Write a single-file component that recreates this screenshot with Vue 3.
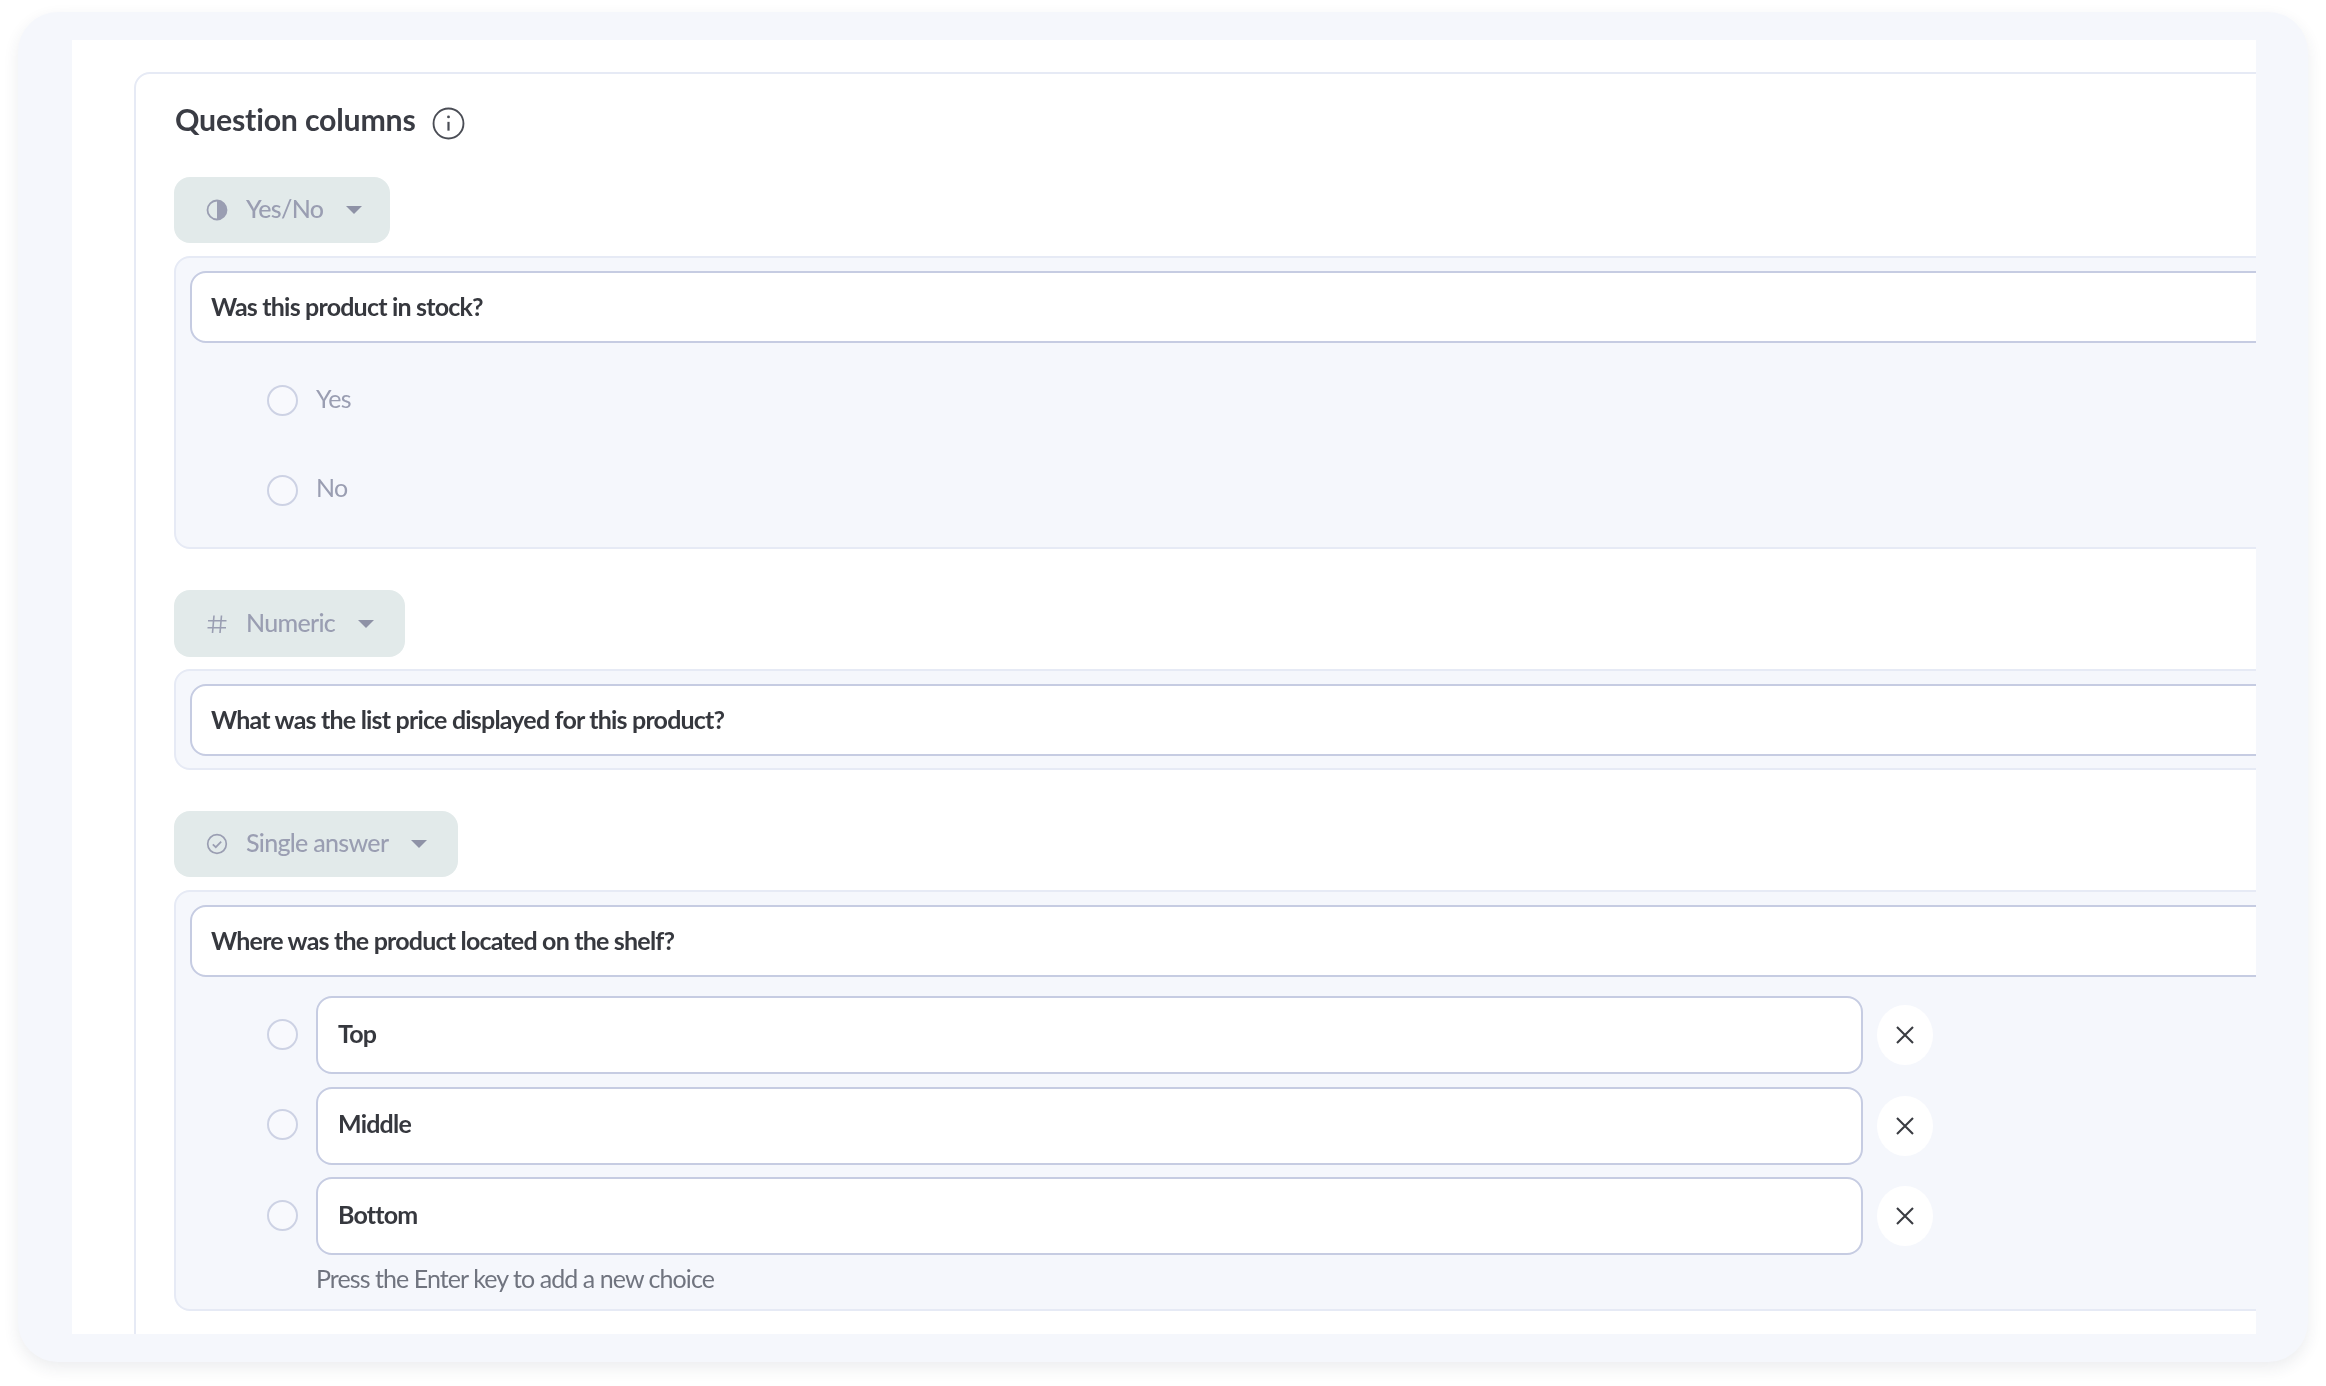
<script setup>
const hint = 'Press the Enter key to add a new choice'
const choices = ['Top', 'Middle', 'Bottom']
</script>

<template>
  <div class="page">
    <div class="frame">
      <div class="viewport">
        <section class="section">
          <div class="title-row">
            <h2 class="title">Question columns</h2>
            <svg class="info" viewBox="0 0 30 30" fill="none" stroke="#4a4d55" stroke-width="1.7">
              <circle cx="15" cy="15" r="13.6" />
              <path d="M15 13.5v8" stroke-width="2" />
              <circle cx="15" cy="9" r="1.3" fill="#4a4d55" stroke="none" />
            </svg>
          </div>

          <button class="chip chip-yes">
            <svg class="chip-icon" viewBox="0 0 22 22">
              <circle cx="11" cy="11" r="9.5" fill="none" stroke="#9a9eb2" stroke-width="1.8" />
              <path d="M11 1.5a9.5 9.5 0 0 1 0 19z" fill="#9a9eb2" />
            </svg>
            <span class="chip-label">Yes/No</span>
            <span class="caret"></span>
          </button>
          <div class="panel panel-yes">
            <div class="field question">Was this product in stock?</div>
            <div class="static-option first"><span class="radio"></span><span class="muted">Yes</span></div>
            <div class="static-option"><span class="radio"></span><span class="muted">No</span></div>
          </div>

          <button class="chip chip-num">
            <svg class="chip-icon" viewBox="0 0 22 22" fill="none" stroke="#9a9eb2" stroke-width="1.6">
              <path d="M8 2.5 6.5 20M15.5 2.5 14 20M2 7.7h18.5M1.5 14.8H20" />
            </svg>
            <span class="chip-label">Numeric</span>
            <span class="caret"></span>
          </button>
          <div class="panel panel-num">
            <div class="field question">What was the list price displayed for this product?</div>
          </div>

          <button class="chip chip-single">
            <svg class="chip-icon" viewBox="0 0 22 22" fill="none" stroke="#9a9eb2" stroke-width="1.7">
              <circle cx="11" cy="11" r="9.3" />
              <path d="m6.8 11.3 3 2.9 5.4-5.6" />
            </svg>
            <span class="chip-label">Single answer</span>
            <span class="caret"></span>
          </button>
          <div class="panel panel-single">
            <div class="field question">Where was the product located on the shelf?</div>
            <div class="choices">
              <div v-for="choice in choices" :key="choice" class="choice">
                <span class="radio choice-radio"></span>
                <div class="field choice-field">{{ choice }}</div>
                <button class="remove" :aria-label="'Remove ' + choice">
                  <svg viewBox="0 0 20 20" fill="none" stroke="#3a3c42" stroke-width="2.1">
                    <path d="M2 2l16 16M18 2 2 18" />
                  </svg>
                </button>
              </div>
            </div>
            <p class="hint">{{ hint }}</p>
          </div>
        </section>
      </div>
    </div>
  </div>
</template>

<style scoped>
.page {
  width: 2326px;
  height: 1386px;
  box-sizing: border-box;
  padding: 12px 18px 24px;
  background: #ffffff;
  font-family: Lato, "Noto Sans", sans-serif;
}
.frame {
  height: 100%;
  box-sizing: border-box;
  padding: 28px 52px 28px 54px;
  background: #f5f7fc;
  border-radius: 40px;
  box-shadow: 0 6px 16px rgba(40, 50, 80, 0.09);
}
.viewport {
  height: 100%;
  box-sizing: border-box;
  padding: 32px 0 0 62px;
  background: #ffffff;
  overflow: hidden;
  filter: blur(0.45px);
}
.section {
  width: 2400px;
  height: 1400px;
  box-sizing: border-box;
  padding: 26px 0 0 38px;
  border: 2px solid #e6eaf5;
  border-radius: 16px;
}
.title-row {
  display: flex;
  align-items: center;
  gap: 16px;
  height: 44px;
  margin-bottom: 33px;
}
.title {
  margin: -6px 0 0 1px;
  font-size: 30.3px;
  line-height: 44px;
  font-weight: 700;
  color: #3a3c44;
  letter-spacing: -0.2px;
}
.info {
  width: 33px;
  height: 33px;
  margin-top: 2px;
}
.chip {
  display: flex;
  align-items: center;
  height: 66px;
  box-sizing: border-box;
  padding: 0 0 0 32px;
  border: 0;
  border-radius: 16px;
  background: #e2eaea;
  font-family: inherit;
}
.chip-yes { width: 216px; }
.chip-num { width: 231px; height: 67px; }
.chip-single { width: 284px; }
.chip-icon {
  width: 22px;
  height: 22px;
  flex: none;
}
.chip-label {
  margin-left: 18px;
  padding-bottom: 4px;
  font-size: 25px;
  font-weight: 500;
  letter-spacing: -0.7px;
  color: #9a9eb2;
}
.caret {
  width: 0;
  height: 0;
  margin-left: 23px;
  border-left: 8px solid transparent;
  border-right: 8px solid transparent;
  border-top: 8px solid #8e92a6;
}
.panel {
  box-sizing: border-box;
  margin-top: 13px;
  padding: 13px 0 0 14px;
  background: #f5f7fc;
  border: 2px solid #e6eaf5;
  border-radius: 16px;
}
.panel-yes { height: 293px; margin-bottom: 41px; }
.panel-num { height: 101px; margin-top: 12px; margin-bottom: 41px; }
.panel-single { height: 421px; }
.field {
  display: flex;
  align-items: center;
  box-sizing: border-box;
  padding: 0 0 3px 19px;
  background: #ffffff;
  border: 2px solid #c6cce2;
  border-radius: 16px;
  font-size: 25px;
  font-weight: 700;
  letter-spacing: -0.8px;
  color: #36383e;
}
.question { height: 72px; }
.radio {
  flex: none;
  width: 31px;
  height: 31px;
  box-sizing: border-box;
  background: #f8f9fd;
  border: 2px solid #cdd2e4;
  border-radius: 50%;
}
.choice-radio { margin-top: -2px; }
.static-option {
  display: flex;
  align-items: center;
  gap: 18px;
  height: 89.5px;
  padding-left: 77px;
}
.static-option.first { margin-top: 13px; }
.muted {
  margin-top: -6px;
  font-size: 25px;
  letter-spacing: -0.7px;
  color: #9a9eb2;
}
.choices {
  display: flex;
  flex-direction: column;
  gap: 12.5px;
  margin-top: 19px;
  padding-left: 77px;
}
.choice {
  display: flex;
  align-items: center;
  height: 78px;
  gap: 18px;
}
.choice-field {
  width: 1547px;
  height: 78px;
  padding: 0 0 5px 20px;
}
.remove {
  display: flex;
  align-items: center;
  justify-content: center;
  width: 56px;
  height: 60px;
  margin-left: -4px;
  padding: 0;
  border: 0;
  border-radius: 50%;
  background: #ffffff;
}
.remove svg {
  width: 20px;
  height: 20px;
}
.hint {
  margin: 7px 0 0 126px;
  font-size: 25px;
  line-height: 32px;
  letter-spacing: -0.93px;
  color: #70747f;
}
</style>
